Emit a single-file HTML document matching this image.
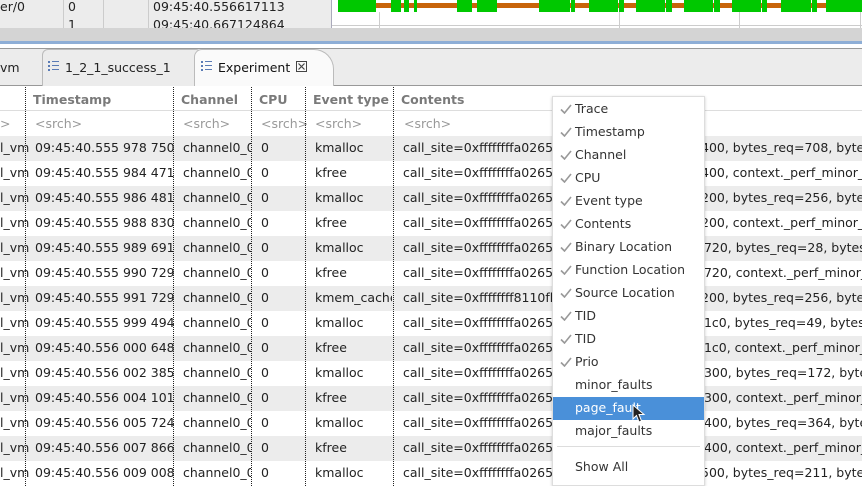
<!DOCTYPE html>
<html><head><meta charset="utf-8"><style>
*{margin:0;padding:0;box-sizing:border-box}
body{width:862px;height:486px;overflow:hidden;background:#fff;font-family:"DejaVu Sans","Liberation Sans",sans-serif;font-size:12.5px;color:#222;position:relative}
.a{position:absolute;white-space:nowrap}
.row{position:absolute;left:0;width:862px;height:25px;overflow:hidden}
.row span{position:absolute;top:4px;white-space:nowrap}
.vd{position:absolute;top:87px;bottom:0;border-left:1px dotted #222}
.hd{position:absolute;top:92px;font-weight:bold;color:#7a7a7a}
.sr{position:absolute;top:116px;color:#999}
.mi{position:absolute;left:575px;color:#333}
.ck{position:absolute;left:560px}
</style></head><body>
<div class="a" style="left:0;top:0;width:332px;height:28px;background:#ececec"></div>
<div class="a" style="left:63px;top:0;height:28px;border-left:1px solid #ccc"></div>
<div class="a" style="left:103px;top:0;height:28px;border-left:1px solid #ccc"></div>
<div class="a" style="left:148px;top:0;height:28px;border-left:1px solid #ccc"></div>
<div class="a" style="left:331px;top:0;height:28px;border-left:1px solid #aab"></div>
<div class="a" style="left:0;top:-1px">er/0</div>
<div class="a" style="left:68px;top:-1px">0</div>
<div class="a" style="left:68px;top:17px">1</div>
<div class="a" style="left:153px;top:-1px">09:45:40.556617113</div>
<div class="a" style="left:153px;top:17px">09:45:40.667124864</div>
<div class="a" style="left:332px;top:25px;width:530px;border-top:1px solid #ccc"></div>
<div class="a" style="left:379px;top:12px;height:16px;border-left:1px solid #ccc"></div>
<div class="a" style="left:619px;top:12px;height:16px;border-left:1px solid #ccc"></div>
<div class="a" style="left:739px;top:12px;height:16px;border-left:1px solid #ccc"></div>
<div class="a" style="left:860px;top:12px;height:16px;border-left:1px solid #ccc"></div>
<div class="a" style="left:338px;top:3px;width:524px;height:5px;background:#c8640a"></div>
<div class="a" style="left:338px;top:0;width:38px;height:12px;background:#00c800"></div>
<div class="a" style="left:391px;top:0;height:12px;width:10px;background:#00c800"></div>
<div class="a" style="left:404px;top:0;height:12px;width:5px;background:#00c800"></div>
<div class="a" style="left:414px;top:0;height:12px;width:3px;background:#00c800"></div>
<div class="a" style="left:457px;top:0;height:12px;width:15px;background:#00c800"></div>
<div class="a" style="left:477px;top:0;height:12px;width:15px;background:#00c800"></div>
<div class="a" style="left:492px;top:0;height:12px;width:5px;background:#00c800"></div>
<div class="a" style="left:539px;top:0;height:12px;width:31px;background:#00c800"></div>
<div class="a" style="left:571px;top:0;height:12px;width:4px;background:#00c800"></div>
<div class="a" style="left:589px;top:0;height:12px;width:29px;background:#00c800"></div>
<div class="a" style="left:619px;top:0;height:12px;width:5px;background:#00c800"></div>
<div class="a" style="left:636px;top:0;height:12px;width:29px;background:#00c800"></div>
<div class="a" style="left:666px;top:0;height:12px;width:6px;background:#00c800"></div>
<div class="a" style="left:684px;top:0;height:12px;width:29px;background:#00c800"></div>
<div class="a" style="left:714px;top:0;height:12px;width:6px;background:#00c800"></div>
<div class="a" style="left:732px;top:0;height:12px;width:29px;background:#00c800"></div>
<div class="a" style="left:762px;top:0;height:12px;width:5px;background:#00c800"></div>
<div class="a" style="left:781px;top:0;height:12px;width:30px;background:#00c800"></div>
<div class="a" style="left:812px;top:0;height:12px;width:5px;background:#00c800"></div>
<div class="a" style="left:826px;top:0;height:12px;width:36px;background:#00c800"></div>
<div class="a" style="left:0;top:28px;width:862px;height:13px;background:#d4d4d4"></div>
<div class="a" style="left:0;top:41px;width:862px;height:3px;background:#8eaed6"></div>
<div class="a" style="left:0;top:48px;width:862px;height:38px;background:#ececec;border-top:1px solid #999"></div>
<div class="a" style="left:0;top:85px;width:862px;border-top:1px solid #999"></div>
<div class="a" style="left:42px;top:49px;width:160px;height:37px;border:1px solid #bbb;border-bottom:none;border-radius:6px 6px 0 0;background:#ececec"></div>
<div class="a" style="left:0;top:60px">vm</div>
<svg class="a" style="left:48px;top:61px" width="11" height="11"><g fill="#5a7bb5"><rect x="0" y="0" width="2" height="2"/><rect x="0" y="4" width="2" height="2"/><rect x="0" y="8" width="2" height="2"/><rect x="4" y="0" width="7" height="1"/><rect x="4" y="4" width="7" height="1"/><rect x="4" y="8" width="7" height="1"/></g></svg>
<div class="a" style="left:65px;top:60px">1_2_1_success_1</div>
<div class="a" style="left:194px;top:49px;width:140px;height:38px;border:1px solid #bbb;border-bottom:none;border-radius:8px 20px 0 0;background:#fafafa"></div>
<svg class="a" style="left:201px;top:61px" width="11" height="11"><g fill="#5a7bb5"><rect x="0" y="0" width="2" height="2"/><rect x="0" y="4" width="2" height="2"/><rect x="0" y="8" width="2" height="2"/><rect x="4" y="0" width="7" height="1"/><rect x="4" y="4" width="7" height="1"/><rect x="4" y="8" width="7" height="1"/></g></svg>
<div class="a" style="left:218px;top:60px;color:#111">Experiment</div>
<svg class="a" style="left:296px;top:61px" width="11" height="11"><rect x="0.5" y="0.5" width="10" height="10" fill="none" stroke="#444"/><path d="M2.5 2.5L8.5 8.5M8.5 2.5L2.5 8.5" stroke="#444" stroke-width="1.2"/></svg>
<div class="a" style="left:0;top:86px;width:862px;height:25px;background:#fff;border-bottom:1px solid #ddd"></div>
<div class="hd" style="left:33px">Timestamp</div>
<div class="hd" style="left:181px">Channel</div>
<div class="hd" style="left:259px">CPU</div>
<div class="hd" style="left:313px">Event type</div>
<div class="hd" style="left:401px">Contents</div>
<div class="sr" style="left:0">&gt;</div>
<div class="sr" style="left:35px">&lt;srch&gt;</div>
<div class="sr" style="left:183px">&lt;srch&gt;</div>
<div class="sr" style="left:261px">&lt;srch&gt;</div>
<div class="sr" style="left:315px">&lt;srch&gt;</div>
<div class="sr" style="left:404px">&lt;srch&gt;</div>
<div id="rows"></div>
<div class="vd" style="left:25px"></div>
<div class="vd" style="left:173px"></div>
<div class="vd" style="left:251px"></div>
<div class="vd" style="left:305px"></div>
<div class="vd" style="left:393px"></div>
<div class="a" style="left:552px;top:96px;width:153px;height:390px;background:#fff;border:1px solid #ddd;box-shadow:0 1px 3px rgba(0,0,0,.2)"></div>
<div class="a" style="left:553px;top:397px;width:151px;height:23px;background:#4a90d9"></div>
<div class="a" style="left:557px;top:446px;width:143px;border-top:1px solid #ddd"></div>
<div id="menu"></div>
<svg class="a" style="left:632px;top:404px" width="14" height="20" viewBox="0 0 14 20"><path d="M1 1 L1 15 L4.5 11.5 L7 18 L9.5 17 L7 10.5 L12 10.5 Z" fill="#222" stroke="#fff" stroke-width="1"/></svg>
<script>
var ts=["555 978 750","555 984 471","555 986 481","555 988 830","555 989 691","555 990 729","555 991 729","555 999 494","556 000 648","556 002 385","556 004 101","556 005 724","556 007 866","556 009 008"];
var ev=["kmalloc","kfree","kmalloc","kfree","kmalloc","kfree","kmem_cache","kmalloc","kfree","kmalloc","kfree","kmalloc","kfree","kmalloc"];
var rt=["400, bytes_req=708, bytes_alloc","400, context._perf_minor_faults","200, bytes_req=256, bytes","200, context._perf_minor_","7720, bytes_req=28, bytes","7720, context._perf_minor_","200, bytes_req=256, bytes","31c0, bytes_req=49, bytes","31c0, context._perf_minor_","1300, bytes_req=172, byte","1300, context._perf_minor_","7400, bytes_req=364, byte","7400, context._perf_minor_","500, bytes_req=211, byte"];
var h="";
for(var i=0;i<14;i++){
var y=136+i*25;var bg=i%2==0?"#ececec":"#fff";
var c=ev[i]=="kmalloc"?"call_site=0xffffffffa02652":(ev[i]=="kfree"?"call_site=0xffffffffa02654":"call_site=0xffffffff8110fb");
var rx=rt[i][3]==","?701:696;
h+='<div class="row" style="top:'+y+'px;background:'+bg+'"><span style="left:0">l_vm</span><span style="left:35px">09:45:40.'+ts[i]+'</span><span style="left:183px;width:68px;overflow:hidden">channel0_0</span><span style="left:261px">0</span><span style="left:315px;width:77px;overflow:hidden">'+ev[i]+'</span><span style="left:403px">'+c+'</span><span style="left:'+rx+'px">'+rt[i]+'</span></div>';
}
document.getElementById("rows").innerHTML=h;
var m=["Trace","Timestamp","Channel","CPU","Event type","Contents","Binary Location","Function Location","Source Location","TID","TID","Prio"];
var g="";
for(var j=0;j<m.length;j++){var yy=101+j*23;g+='<svg class="ck" style="top:'+(yy+3)+'px" width="12" height="10"><path d="M1 5.5L4.5 9L11 1" fill="none" stroke="#999" stroke-width="1.6"/></svg><div class="mi" style="top:'+yy+'px">'+m[j]+'</div>';}
g+='<div class="mi" style="top:377px">minor_faults</div><div class="mi" style="top:400px;color:#fff">page_fault</div><div class="mi" style="top:423px">major_faults</div><div class="mi" style="top:459px">Show All</div>';
document.getElementById("menu").innerHTML=g;
</script>
</body></html>
